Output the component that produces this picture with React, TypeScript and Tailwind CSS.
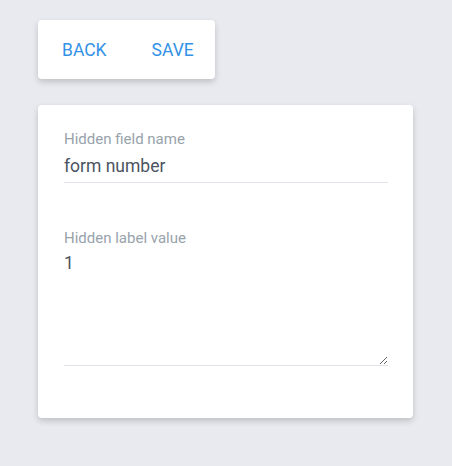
import React, { useState } from "react";

const font = { fontFamily: "Roboto, 'Noto Sans', sans-serif" };

export default function App() {
  const [name, setName] = useState("form number");
  const [value, setValue] = useState("1");

  return (
    <div className="min-h-[466px] w-full bg-[#e9eaef] pl-[38px] pt-[20px]" style={font}>
      {/* Action bar */}
      <div className="flex h-[59px] w-[177px] items-center rounded-[4px] bg-white pl-[8px] pt-[3px] shadow-[0_3px_6px_rgba(0,0,0,0.18)]">
        <button className="px-[16px] text-[17.5px] font-normal leading-none text-[#3492e6]">BACK</button>
        <button className="ml-[13px] px-[16px] text-[17.5px] font-normal leading-none text-[#3492e6]">SAVE</button>
      </div>

      {/* Form card */}
      <div className="mt-[26px] h-[313px] w-[375px] rounded-[4px] bg-white px-[26px] pt-[25px] shadow-[0_3px_6px_rgba(0,0,0,0.18)]">
        <label className="block">
          <span className="block text-[15px] leading-[18px] text-[#98a3ab]">Hidden field name</span>
          <input
            value={name}
            onChange={(e) => setName(e.target.value)}
            className="mt-[4px] block h-[31px] w-[324px] border-b border-[#dfe2e6] pb-[3px] text-[17.5px] text-[#4a5461] outline-none"
          />
        </label>
        <label className="mt-[46px] block">
          <span className="block text-[15px] leading-[18px] text-[#98a3ab]">Hidden label value</span>
          <textarea
            value={value}
            onChange={(e) => setValue(e.target.value)}
            className="mt-[3px] block h-[116px] w-[324px] border-b border-[#dfe2e6] pt-[2px] text-[17.5px] leading-[22px] text-[#4a5461] outline-none"
          />
        </label>
      </div>
    </div>
  );
}
